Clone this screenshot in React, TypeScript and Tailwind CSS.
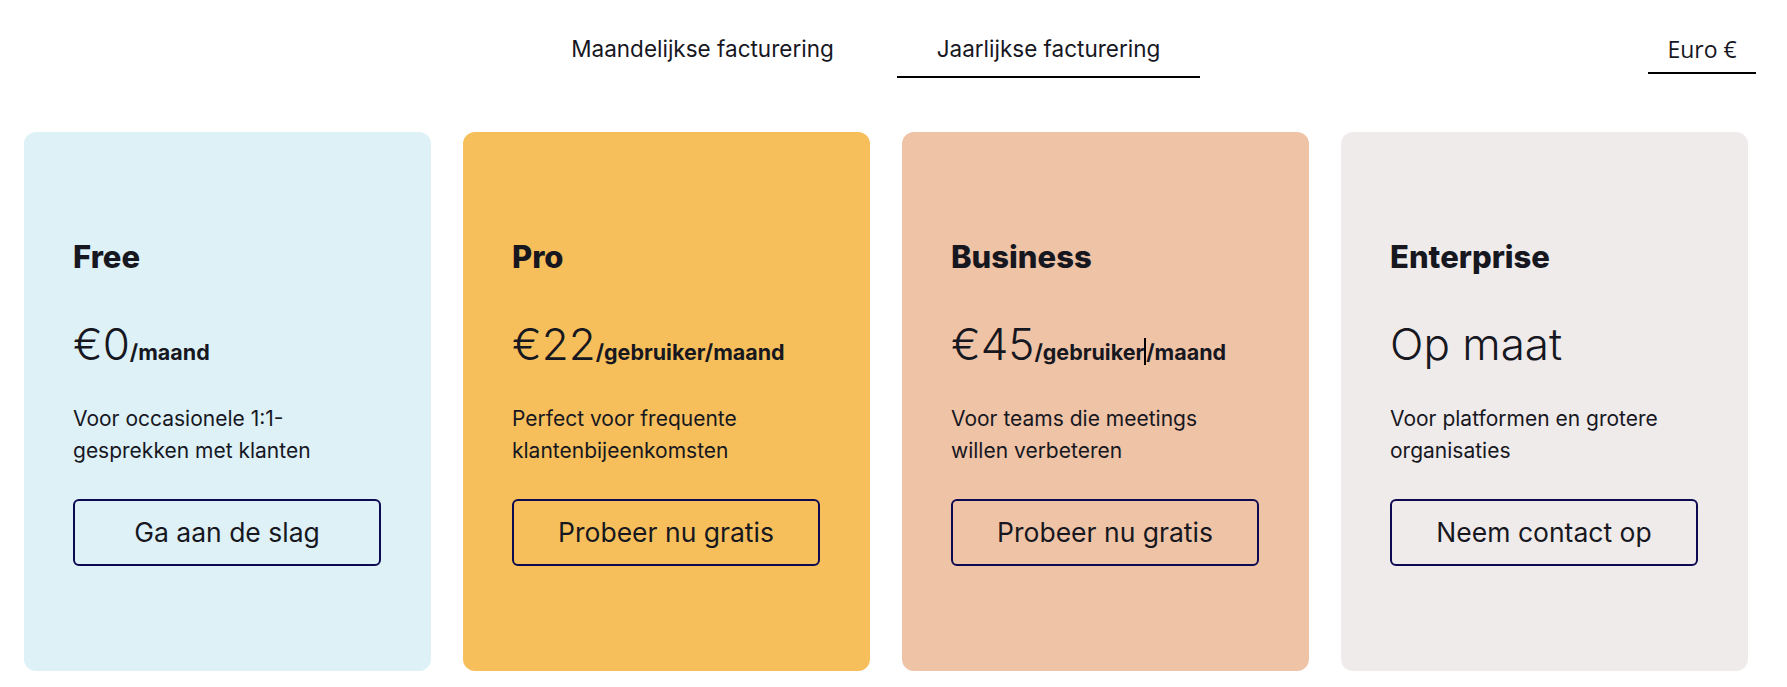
import React, { useState } from "react";

const plans = [
  {
    name: "Free",
    price: "€0",
    unit: "/maand",
    desc: ["Voor occasionele 1:1-", "gesprekken met klanten"],
    cta: "Ga aan de slag",
    bg: "bg-[#ddf1f7]",
  },
  {
    name: "Pro",
    price: "€22",
    unit: "/gebruiker/maand",
    desc: ["Perfect voor frequente", "klantenbijeenkomsten"],
    cta: "Probeer nu gratis",
    bg: "bg-[#f6bf5b]",
  },
  {
    name: "Business",
    price: "€45",
    unit: "/gebruiker/maand",
    caret: true,
    desc: ["Voor teams die meetings", "willen verbeteren"],
    cta: "Probeer nu gratis",
    bg: "bg-[#eec3a6]",
  },
  {
    name: "Enterprise",
    price: "Op maat",
    unit: "",
    desc: ["Voor platformen en grotere", "organisaties"],
    cta: "Neem contact op",
    bg: "bg-[#efebea]",
  },
];

export default function App() {
  const [billing, setBilling] = useState<"month" | "year">("year");

  return (
    <div
      className="min-h-screen bg-white text-[#17171f]"
      style={{ fontFamily: "Inter, Lato, sans-serif" }}
    >
      {/* billing tabs + currency */}
      <div className="flex items-start">
        <div className="ml-[551px] flex gap-[43px]">
          <button
            className={`w-[303px] pt-[35px] pb-[13px] text-[22.5px] leading-[28px] border-b-2 ${
              billing === "month" ? "border-black" : "border-transparent"
            }`}
            onClick={() => setBilling("month")}
          >
            Maandelijkse facturering
          </button>
          <button
            className={`w-[303px] pt-[35px] pb-[13px] text-[22.5px] leading-[28px] border-b-2 ${
              billing === "year" ? "border-black" : "border-transparent"
            }`}
            onClick={() => setBilling("year")}
          >
            Jaarlijkse facturering
          </button>
        </div>
        <div
          className="ml-auto mr-[31px] w-[108px] pt-[35px] pb-[9px] border-b-2 border-black text-center text-[23px] leading-[28px]"
          style={{ fontFamily: "'Open Sans', sans-serif" }}
        >
          Euro €
        </div>
      </div>

      {/* plan cards */}
      <div className="mt-[54px] flex gap-[32px] pl-[24px]">
        {plans.map((p) => (
          <div
            key={p.name}
            className={`w-[407px] rounded-[12px] ${p.bg} pl-[49px] pt-[107px] pb-[105px]`}
          >
            <h3 className="text-[31px] leading-[36px] font-extrabold">{p.name}</h3>

            <div className="mt-[42px] h-[54px] leading-[54px] whitespace-nowrap">
              <span className="text-[44px] font-light">{p.price}</span>
              {p.unit && (
                <span className="text-[21.5px] leading-none font-bold">
                  {p.caret ? (
                    <>
                      /gebruiker
                      <span className="inline-block w-[2px] h-[27px] bg-black align-[-5px]" />
                      /maand
                    </>
                  ) : (
                    p.unit
                  )}
                </span>
              )}
            </div>

            <p className="mt-[32px] text-[21px] leading-[32px]">
              {p.desc[0]}
              <br />
              {p.desc[1]}
            </p>

            <button className="mt-[32px] w-[308px] h-[67px] rounded-[6px] border-2 border-[#0d0a52] text-[26.5px]">
              {p.cta}
            </button>
          </div>
        ))}
      </div>
    </div>
  );
}
